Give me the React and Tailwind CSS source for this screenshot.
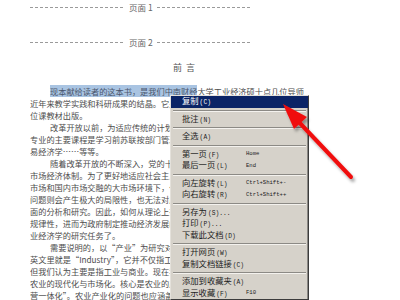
import React from 'react';

const cjk = { fontFamily: '"Noto Sans CJK SC", "Noto Sans", sans-serif' };

const lines = [
    { t: '现本献给读者的这本书，是我们中南财经大学工业经济硕士点几位导师', indent: true, hl: 18 },
    { t: '近年来教学实践和科研成果的结晶。它是作为工业经济专业研究生的学位' },
    { t: '位课教材出版。' },
    { t: '改革开放以前，为适应传统的计划经济体制，我国高校工业经济专业', indent: true },
    { t: '专业的主要课程是学习前苏联按部门管理的工业经济学、商业经济学、贸' },
    { t: '易经济学……等等。' },
    { t: '随着改革开放的不断深入，党的十四大明确提出我国要建立社会主义', indent: true },
    { t: '市场经济体制。为了更好地适应社会主义市场经济的要求，特别是在国际' },
    { t: '市场和国内市场交融的大市场环境下，仅仅按部门研究各个产业的经济' },
    { t: '问题则会产生极大的局限性，也无法对产业之间的关系进行全方位、多层' },
    { t: '面的分析和研究。因此，如何从理论上揭示产业发展和产业之间关系的' },
    { t: '规律性，进而为政府制定推动经济发展的产业政策提供依据，就成为产' },
    { t: '业经济学的研究任务了。' },
    { t: '需要说明的，以“产业”为研究对象的产业经济学，“产业”在', indent: true },
    { t: '英文里就是“Industry”，它并不仅指工业，还包括农业和服务业等，' },
    { t: '但我们认为主要是指工业与商业。现在我国农业问题的关键在于实现' },
    { t: '农业的现代化与市场化。核心是农业的产业化，即实现贸工农一体化' },
    { t: '营一体化”。农业产业化的问题也应涵盖在产业经济学之中。' },
];

const menu = [
    { l: '复制', k: 'C', active: true },
    'sep',
    { l: '批注', k: 'N' },
    'sep',
    { l: '全选', k: 'A' },
    'sep',
    { l: '第一页', k: 'F', h: 'Home' },
    { l: '最后一页', k: 'L', h: 'End' },
    'sep',
    { l: '向左旋转', k: 'L', h: 'Ctrl+Shift+-' },
    { l: '向右旋转', k: 'R', h: 'Ctrl+Shift++' },
    'sep',
    { l: '另存为', k: 'S', dots: true },
    { l: '打印', k: 'P', dots: true },
    { l: '下载此文档', k: 'D' },
    'sep',
    { l: '打开网页', k: 'W' },
    { l: '复制文档链接', k: 'C' },
    'sep',
    { l: '添加到收藏夹', k: 'A' },
    { l: '显示收藏', k: 'F', h: 'F10' },
];

const Dashes = ({ w }) => (
    <div className={`h-px ${w} bg-[repeating-linear-gradient(90deg,#9a9a9a_0_3px,transparent_3px_5px)]`} />
);

const PageMark = ({ n }) => (
    <div className="h-[12px] flex items-center pl-[30px]">
        <Dashes w="w-[95px]" />
        <span className="mx-[4px] text-[8.5px] leading-none text-[#666]" style={cjk}>页面 {n}</span>
        <Dashes w="w-[93px]" />
    </div>
);

const MenuItem = ({ item }) => {
    if (item === 'sep') {
        return (
            <div className="h-[6px] flex flex-col justify-center px-[2px]">
                <div className="h-px bg-[#8c8a85]" />
                <div className="h-px bg-[#f4f2ee]" />
            </div>
        );
    }
    return (
        <div className={`h-[11.5px] flex items-center pl-[11px] ${item.active ? 'bg-[#0b2466] text-white' : 'text-[#1c1c1c]'}`}>
            <div className="w-[64px] whitespace-nowrap text-[8.3px] leading-[11px]" style={cjk}>
                {item.l}
                <span className="text-[6.3px] ml-[1px] font-['Liberation_Mono',monospace]">
                    ({item.k}){item.dots ? '...' : ''}
                </span>
            </div>
            {item.h && (
                <span className="text-[5.6px] leading-none font-['Liberation_Mono',monospace] whitespace-nowrap">{item.h}</span>
            )}
        </div>
    );
};

export default function App() {
    return (
        <div className="relative w-[400px] h-[300px] overflow-hidden bg-white">
            {/* 文档页面 */}
            <div className="pt-[1px]">
                <PageMark n={1} />
                <div className="mt-[23px]"><PageMark n={2} /></div>
                <div className="mt-[13px] h-[12px] pl-[173px] flex items-center text-[9px] leading-none text-[#555]" style={cjk}>
                    前&nbsp;&nbsp;言
                </div>
                <div className="mt-[12px] ml-[30px] w-[274px] overflow-hidden text-[8.2px] text-[#4d4d4d]" style={cjk}>
                    {lines.map((ln, i) => (
                        <div key={i} className={`h-[12px] leading-[12px] whitespace-nowrap ${ln.indent ? 'pl-[20px]' : ''}`}>
                            {ln.hl ? (
                                <>
                                    <span className="bg-[#a9c4e2] text-[#4a566c]">{ln.t.slice(0, ln.hl)}</span>
                                    {ln.t.slice(ln.hl)}
                                </>
                            ) : ln.t}
                        </div>
                    ))}
                </div>
            </div>

            {/* 右键菜单 */}
            <div className="absolute left-[170px] top-[95px] w-[139px] bg-[#d6d2ca] border border-t-[#e4e1db] border-l-[#e4e1db] border-r-[#3c3c3c] border-b-[#3c3c3c] shadow-[inset_-1px_0_#8a8884]">
                {menu.map((m, i) => <MenuItem key={i} item={m} />)}
            </div>

            {/* 红色箭头 */}
            <svg className="absolute left-0 top-0 pointer-events-none" width="400" height="300" viewBox="0 0 400 300">
                <defs>
                    <filter id="sh" x="-20%" y="-20%" width="140%" height="140%">
                        <feDropShadow dx="2" dy="3" stdDeviation="1.5" floodColor="#000" floodOpacity="0.35" />
                    </filter>
                </defs>
                <g filter="url(#sh)">
                    <line x1="351" y1="177" x2="296" y2="119" stroke="#f01010" strokeWidth="4" strokeLinecap="round" />
                    <polygon points="283,104 307,117 294,129" fill="#f01010" />
                </g>
            </svg>
        </div>
    );
}
